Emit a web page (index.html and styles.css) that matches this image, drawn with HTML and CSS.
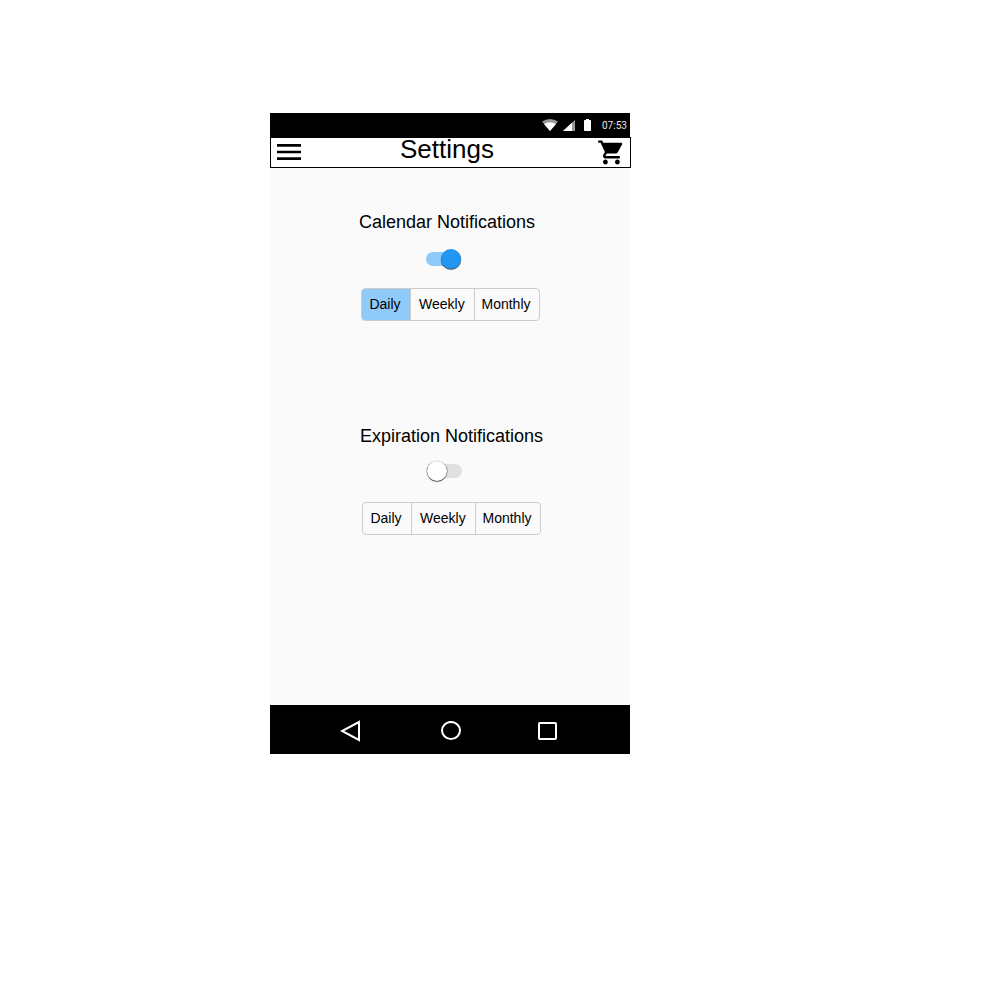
FILE: index.html
```html
<!DOCTYPE html>
<html lang="en">
<head>
<meta charset="utf-8">
<title>Settings</title>
<link rel="stylesheet" href="styles.css">
</head>
<body>
<div class="phone">
  <div class="status">
    <svg class="wifi" width="16" height="12" viewBox="0 0 16 12"><path d="M0 2.6Q8-2.6 16 2.6L8 12Z" fill="#999"/><path d="M2 5Q8 1.7 14 5L8 12Z" fill="#fff"/></svg>
    <svg class="signal" width="12" height="11" viewBox="0 0 12 11"><path d="M0 11L12 0V11Z" fill="#999"/><path d="M0 11L9 2.7V11Z" fill="#fff"/></svg>
    <svg class="battery" width="7" height="12" viewBox="0 0 7 12"><path d="M2 0H5V1H6.3Q7 1 7 1.7V11.3Q7 12 6.3 12H.7Q0 12 0 11.3V1.7Q0 1 .7 1H2Z" fill="#fff"/></svg>
    <span class="clock">07:53</span>
  </div>
  <header class="header">
    <svg class="menu" width="32" height="32" viewBox="0 0 24 24"><path d="M3 18h18v-2H3v2zm0-5h18v-2H3v2zm0-7v2h18V6H3z"/></svg>
    <h1 class="title">Settings</h1>
    <svg class="cart" width="28.8" height="28.8" viewBox="0 0 24 24"><path d="M7 18c-1.1 0-1.99.9-1.99 2S5.9 22 7 22s2-.9 2-2-.9-2-2-2zM1 2v2h2l3.6 7.59-1.35 2.45c-.16.28-.25.61-.25.96 0 1.1.9 2 2 2h12v-2H7.42c-.14 0-.25-.11-.25-.25l.03-.12.9-1.63h7.45c.75 0 1.41-.41 1.75-1.03l3.58-6.49c.08-.14.12-.31.12-.48 0-.55-.45-1-1-1H5.21l-.94-2H1zm16 16c-1.1 0-1.99.9-1.99 2s.89 2 1.99 2 2-.9 2-2-.9-2-2-2z"/></svg>
  </header>
  <main class="content">
    <section class="group calendar">
      <h2 class="label">Calendar Notifications</h2>
      <div class="switch on"><span class="knob"></span></div>
      <div class="segments"><span class="segment selected">Daily</span><span class="segment">Weekly</span><span class="segment">Monthly</span></div>
    </section>
    <section class="group expiration">
      <h2 class="label">Expiration Notifications</h2>
      <div class="switch"><span class="knob"></span></div>
      <div class="segments"><span class="segment">Daily</span><span class="segment">Weekly</span><span class="segment">Monthly</span></div>
    </section>
  </main>
  <nav class="nav">
    <svg class="back" width="20" height="22" viewBox="0 0 20 22"><path d="M19 2V20L2 11Z" fill="none" stroke="#fff" stroke-width="2"/></svg>
    <svg class="home" width="20" height="20" viewBox="0 0 20 20"><ellipse cx="10" cy="9.5" rx="9" ry="8.6" fill="none" stroke="#fff" stroke-width="2"/></svg>
    <svg class="recent" width="19" height="18" viewBox="0 0 19 18"><rect x="1" y="1" width="17" height="16" rx=".8" fill="none" stroke="#fff" stroke-width="2"/></svg>
  </nav>
</div>
</body>
</html>
```
FILE: styles.css
```css
* { box-sizing: border-box; }
body {
  margin: 0;
  background: #fff;
  color: #000;
  font-family: "Liberation Sans", Arial, sans-serif;
}
svg { display: block; flex: none; }
h1, h2 { margin: 0; font-weight: normal; white-space: nowrap; }
.phone {
  display: flex;
  flex-direction: column;
  width: 360px;
  height: 641px;
  margin: 113px 0 0 270px;
  background: #fafafa;
}
.status {
  display: flex;
  flex: none;
  align-items: center;
  justify-content: flex-end;
  height: 24px;
  padding-right: 3px;
  background: #000;
}
.wifi { margin-right: 5px; }
.signal { margin: 1px 9px 0 0; }
.battery { margin-right: 11px; }
.clock { width: 25px; padding-top: 2px; color: #e6e6e6; font: 10px/12px Roboto, sans-serif; }
.header {
  display: flex;
  flex: none;
  width: 361px;
  height: 31px;
  border: 1px solid #000;
  background: #fff;
}
.menu { margin: -2px 0 0 2px; }
.title { margin: -4px 0 0 95px; width: 94px; font-size: 26px; line-height: 30px; }
.cart { margin: -.4px 0 0 102.8px; }
.content { flex: 1; padding-top: 43px; }
.group { display: flex; flex-direction: column; align-items: flex-start; height: 214px; }
.calendar { padding-left: 89px; }
.expiration { padding-left: 90px; }
.label { font-size: 18px; line-height: 22px; }
.switch {
  display: flex;
  align-items: center;
  width: 34.6px;
  height: 14px;
  margin: 19px 0 0 67.4px;
  border-radius: 7px;
  background: #e0e0e0;
}
.expiration .switch { margin: 17px 0 0 67px; }
.knob {
  flex: none;
  width: 20px;
  height: 20px;
  border-radius: 50%;
  background: #fff;
  box-shadow: 0 .5px 1px .3px rgba(0,0,0,.8);
}
.switch.on { justify-content: flex-end; background: #90caf9; }
.on .knob { background: #2196f3; box-shadow: 0 .8px .8px rgba(0,0,0,.8); }
.segments {
  display: flex;
  width: 179px;
  height: 33px;
  margin: 22px 0 0 2px;
  border: 1px solid #ccc;
  border-radius: 4px;
  overflow: hidden;
}
.expiration .segments { margin-top: 24px; }
.segment {
  width: 64px;
  padding-left: 8px;
  font-size: 14px;
  line-height: 30px;
}
.segment:first-child { width: 48px; padding-left: 7.4px; }
.segment + .segment { border-left: 1px solid #ccc; }
.segment:last-child { width: 65px; padding-left: 6.5px; }
.selected { background: #90caf9; }
.nav {
  display: flex;
  flex: none;
  height: 49px;
  padding: 15px 0 0 70px;
  background: #000;
}
.home { margin: 1px 0 0 81px; }
.recent { margin: 2px 0 0 77px; }
```
